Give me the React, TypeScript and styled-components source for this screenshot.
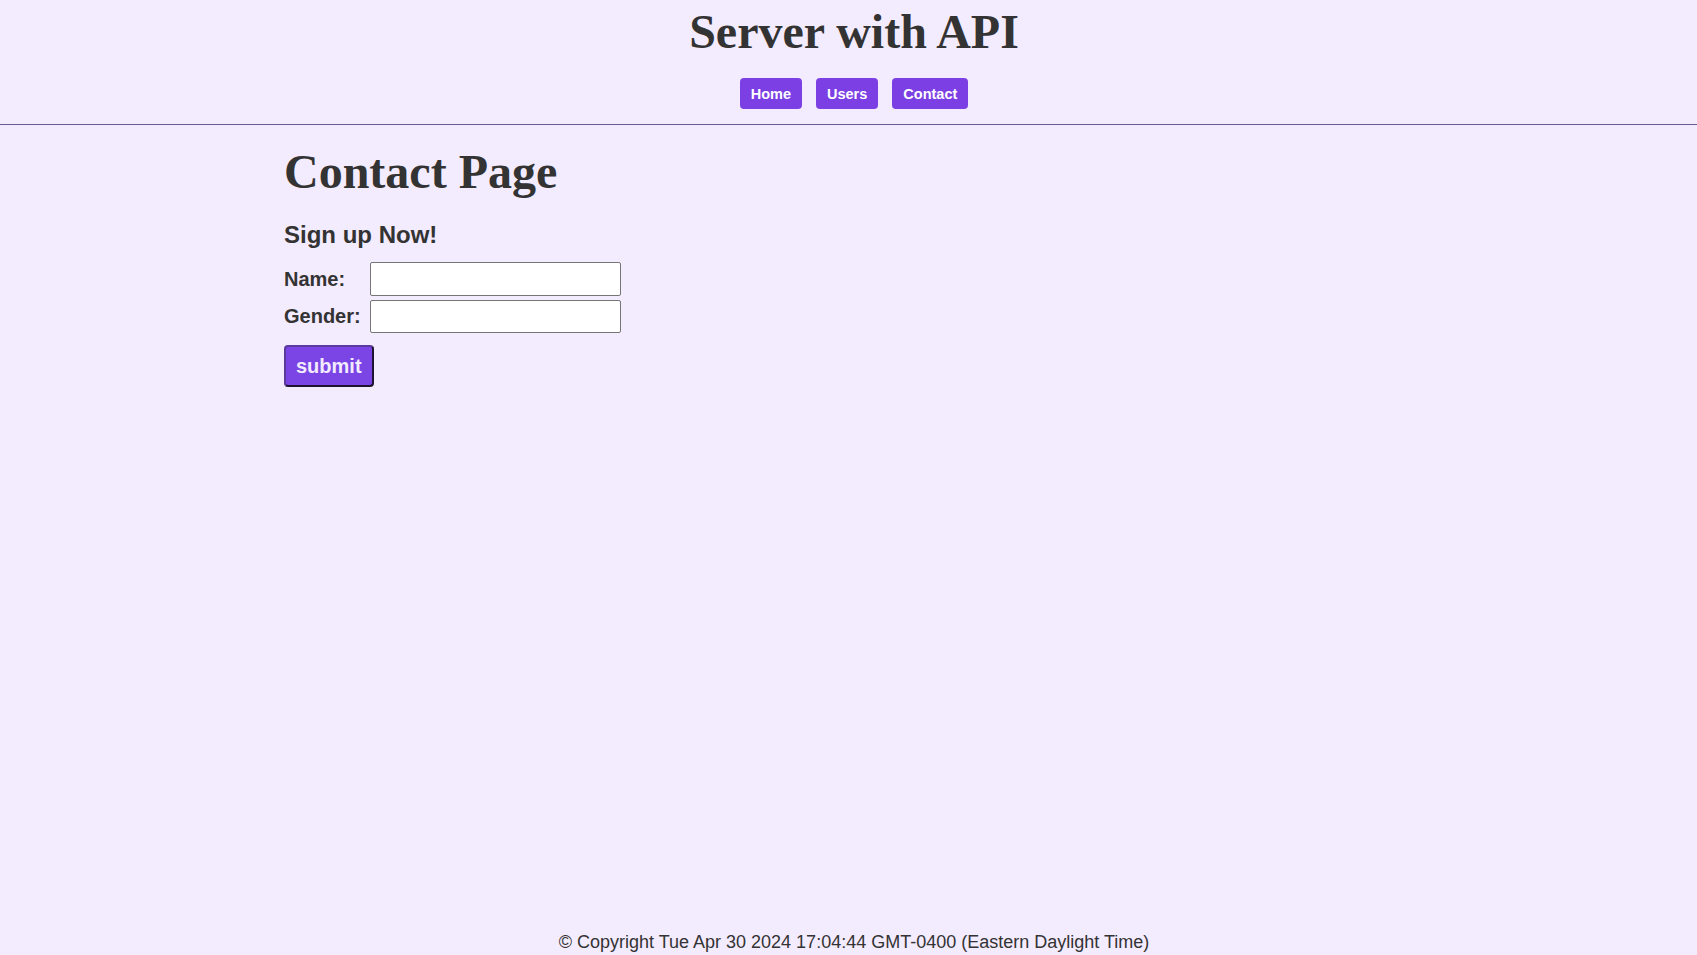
import styled, { createGlobalStyle } from 'styled-components'

const GlobalStyle = createGlobalStyle`
  html,
  body {
    margin: 0;
    padding: 0;
    background: #f3ebfe;
  }

  body {
    color: #333;
    font-family: 'Liberation Sans', Arial, sans-serif;
  }
`

const Page = styled.div`
  display: flex;
  flex-direction: column;
  min-height: 100vh;
  padding-left: 11px;
  box-sizing: border-box;
`

const Header = styled.header`
  display: flex;
  flex-direction: column;
  align-items: center;
  padding-top: 5px;
  margin-left: -11px;
  padding-left: 11px;
  border-bottom: 1px solid #6b5a92;
`

const SiteTitle = styled.h1`
  margin: 0;
  font-family: 'Liberation Serif', 'Times New Roman', serif;
  font-size: 48px;
  font-weight: bold;
  line-height: 53px;
`

const Nav = styled.nav`
  display: flex;
  gap: 14px;
  margin: 20px 0 15px;
`

const NavLink = styled.a`
  display: flex;
  align-items: center;
  height: 31px;
  padding: 0 11px;
  border-radius: 4px;
  background: #7b3fe4;
  color: #fff;
  font-size: 14.5px;
  font-weight: bold;
  text-decoration: none;
`

const Main = styled.main`
  padding-left: 273px;
`

const PageTitle = styled.h1`
  margin: 20px 0 0;
  font-family: 'Liberation Serif', 'Times New Roman', serif;
  font-size: 48px;
  font-weight: bold;
  line-height: 53px;
`

const SubTitle = styled.h2`
  margin: 23px 0 0;
  font-size: 24px;
  font-weight: bold;
  line-height: 28px;
`

const Form = styled.form`
  display: grid;
  grid-template-columns: max-content 251px;
  column-gap: 9px;
  row-gap: 4px;
  align-items: center;
  justify-content: start;
  margin-top: 13px;
`

const Label = styled.label`
  font-size: 20px;
  font-weight: bold;
`

const Input = styled.input`
  box-sizing: border-box;
  width: 251px;
  height: ${(p: { $h: number }) => p.$h}px;
  border: 1px solid #767676;
  border-radius: 2px;
  background: #fff;
  font-size: 16px;
`

const SubmitButton = styled.button`
  grid-column: 1 / -1;
  justify-self: start;
  margin-top: 8px;
  height: 42px;
  padding: 0 10px;
  border-width: 2px;
  border-style: solid;
  border-color: #5a3a9e #1d1530 #1d1530 #5a3a9e;
  border-radius: 4px;
  background: #7b45e6;
  color: #f3ebfe;
  font-family: 'Liberation Sans', Arial, sans-serif;
  font-size: 20px;
  font-weight: bold;
`

const Footer = styled.footer`
  margin-top: auto;
  padding-bottom: 3px;
  text-align: center;
  font-size: 18px;
  line-height: 20px;
`

export default function App() {
  return (
    <Page>
      <GlobalStyle />
      <Header>
        <SiteTitle>Server with API</SiteTitle>
        <Nav>
          <NavLink href="#">Home</NavLink>
          <NavLink href="#">Users</NavLink>
          <NavLink href="#">Contact</NavLink>
        </Nav>
      </Header>
      <Main>
        <PageTitle>Contact Page</PageTitle>
        <SubTitle>Sign up Now!</SubTitle>
        <Form onSubmit={(e) => e.preventDefault()}>
          <Label htmlFor="name">Name:</Label>
          <Input id="name" type="text" $h={34} />
          <Label htmlFor="gender">Gender:</Label>
          <Input id="gender" type="text" $h={33} />
          <SubmitButton type="submit">submit</SubmitButton>
        </Form>
      </Main>
      <Footer>© Copyright Tue Apr 30 2024 17:04:44 GMT-0400 (Eastern Daylight Time)</Footer>
    </Page>
  )
}
